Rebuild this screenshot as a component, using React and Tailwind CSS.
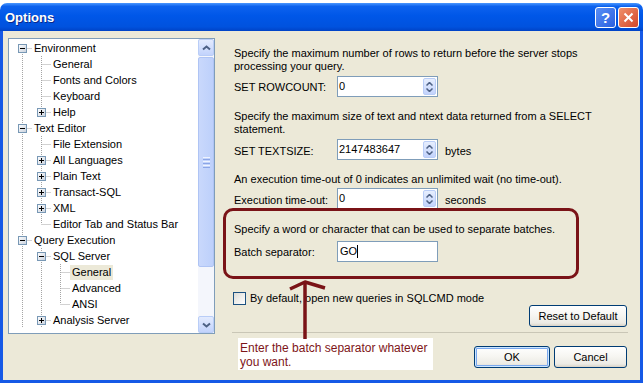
import React from "react";

const tree = [
  { label: "Environment", depth: 0, anc: [], exp: "-", first: true, next: true },
  { label: "General", depth: 1, anc: [true], next: true },
  { label: "Fonts and Colors", depth: 1, anc: [true], next: true },
  { label: "Keyboard", depth: 1, anc: [true], next: true },
  { label: "Help", depth: 1, anc: [true], exp: "+", next: false },
  { label: "Text Editor", depth: 0, anc: [], exp: "-", next: true },
  { label: "File Extension", depth: 1, anc: [true], next: true },
  { label: "All Languages", depth: 1, anc: [true], exp: "+", next: true },
  { label: "Plain Text", depth: 1, anc: [true], exp: "+", next: true },
  { label: "Transact-SQL", depth: 1, anc: [true], exp: "+", next: true },
  { label: "XML", depth: 1, anc: [true], exp: "+", next: true },
  { label: "Editor Tab and Status Bar", depth: 1, anc: [true], next: false },
  { label: "Query Execution", depth: 0, anc: [], exp: "-", next: true },
  { label: "SQL Server", depth: 1, anc: [true], exp: "-", next: true },
  { label: "General", depth: 2, anc: [true, true], next: true, selected: true },
  { label: "Advanced", depth: 2, anc: [true, true], next: true },
  { label: "ANSI", depth: 2, anc: [true, true], next: false },
  { label: "Analysis Server", depth: 1, anc: [true], exp: "+", next: true },
];

// dotted connector lines + expander box for one tree row
function Prefix({ row }) {
  const cx = 19 * row.depth + 9.5;
  return (
    <svg width={19 * (row.depth + 1)} height={16} className="shrink-0">
      {row.anc.map((on, i) =>
        on ? (
          <line key={i} x1={19 * i + 9.5} x2={19 * i + 9.5} y1={0} y2={16} stroke="#A5A5A5" strokeDasharray="1 1" />
        ) : null
      )}
      {!row.first && <line x1={cx} x2={cx} y1={0} y2={8} stroke="#A5A5A5" strokeDasharray="1 1" />}
      {row.next && <line x1={cx} x2={cx} y1={8} y2={16} stroke="#A5A5A5" strokeDasharray="1 1" />}
      <line x1={cx} x2={19 * row.depth + 19} y1={8.5} y2={8.5} stroke="#A5A5A5" strokeDasharray="1 1" />
      {row.exp && (
        <g>
          <defs>
            <linearGradient id="exp" x1="0" y1="0" x2="1" y2="1">
              <stop offset="0" stopColor="#FFFFFF" />
              <stop offset="1" stopColor="#C8D0DC" />
            </linearGradient>
          </defs>
          <rect x={cx - 4} y={4.5} width={8} height={8} fill="url(#exp)" stroke="#7898B5" />
          <line x1={cx - 2.5} x2={cx + 2.5} y1={8.5} y2={8.5} stroke="#000" />
          {row.exp === "+" && <line x1={cx} x2={cx} y1={6} y2={11} stroke="#000" />}
        </g>
      )}
    </svg>
  );
}

function Chevron({ down }) {
  return (
    <svg width="9" height="6" viewBox="0 0 9 6">
      <path d={down ? "M1 1.5 L4.5 4.5 L8 1.5" : "M1 4.5 L4.5 1.5 L8 4.5"} fill="none" stroke="#4D6185" strokeWidth="2" />
    </svg>
  );
}

function ScrollButton({ down }) {
  return (
    <div className="h-[17px] w-[16px] shrink-0 rounded-[2px] border border-[#B9CDF7] bg-[linear-gradient(to_bottom,#E3EBFE,#C2D3FC)] flex items-center justify-center">
      <Chevron down={down} />
    </div>
  );
}

function Spin() {
  return (
    <div className="ml-auto mr-[1px] h-[17px] w-[13px] rounded-[2px] border border-[#B9CDF7] bg-[linear-gradient(to_bottom,#E6EEFE,#C3D3FC)] flex flex-col items-center justify-center gap-[2px]">
      <svg width="7" height="4" viewBox="0 0 7 4"><path d="M0.5 3.5 L3.5 0.5 L6.5 3.5" fill="none" stroke="#4D6185" strokeWidth="1.5" /></svg>
      <svg width="7" height="4" viewBox="0 0 7 4"><path d="M0.5 0.5 L3.5 3.5 L6.5 0.5" fill="none" stroke="#4D6185" strokeWidth="1.5" /></svg>
    </div>
  );
}

function NumBox({ value }) {
  return (
    <div className="h-[21px] w-[101px] border border-[#7F9DB9] bg-white flex items-center pl-[1px]">
      <span className="leading-[13px]">{value}</span>
      <Spin />
    </div>
  );
}

function XpButton({ children, className, primary }) {
  return (
    <button
      className={
        "h-[22px] rounded-[3px] border border-[#003C74] bg-[linear-gradient(to_bottom,#FFFFFF_0%,#F7F6F2_45%,#ECEBE5_85%,#D8D2C6_100%)] text-[11px] leading-[13px] text-black " +
        (primary ? "shadow-[inset_0_0_0_1px_#CEE7FF,inset_0_0_0_2px_#7AA8EE] " : "") +
        className
      }
    >
      {children}
    </button>
  );
}

export default function App() {
  return (
    <div className="relative h-[383px] w-[643px] overflow-hidden bg-white font-['Liberation_Sans',Arial,sans-serif] text-[11px] leading-[13px] text-black">
      <div className="h-[3px] bg-white" />
      <div className="flex h-[380px] flex-col">
        {/* title bar */}
        <div className="flex h-[28px] shrink-0 items-center rounded-t-[7px] bg-[linear-gradient(to_bottom,#4A97FF_0%,#0D62EE_12%,#0057E8_45%,#0052DE_85%,#0043C6_100%)] pl-[5px] pr-[4px]">
          <span className="text-[13px] font-bold text-white [text-shadow:1px_1px_0_#0A2A8A]">Options</span>
          <div className="ml-auto flex gap-[2px]">
            <div className="flex h-[21px] w-[21px] items-center justify-center rounded-[3px] border border-white bg-[linear-gradient(135deg,#5A8FF5,#2A60E0)] text-[15px] font-bold text-white">
              ?
            </div>
            <div className="flex h-[21px] w-[21px] items-center justify-center rounded-[3px] border border-white bg-[linear-gradient(135deg,#F0906A,#D4472A)]">
              <svg width="11" height="11" viewBox="0 0 11 11">
                <path d="M1.5 1.5 L9.5 9.5 M9.5 1.5 L1.5 9.5" stroke="#fff" strokeWidth="2" />
              </svg>
            </div>
          </div>
        </div>

        {/* window body */}
        <div className="flex flex-1 border-x-[3px] border-b-[3px] border-[#1659E6] bg-[#ECE9D8] pl-[5px] pt-[7px]">
          {/* tree */}
          <div className="flex h-[296px] w-[207px] shrink-0 border border-[#7F9DB9] bg-white">
            <div className="flex-1 overflow-hidden pl-[4px] pt-[1px]">
              {tree.map((row, i) => (
                <div key={i} className="flex h-[16px] items-center whitespace-nowrap">
                  <Prefix row={row} />
                  <span className={"px-[2px] leading-[15px] " + (row.selected ? "bg-[#ECE9D8]" : "")}>{row.label}</span>
                </div>
              ))}
            </div>
            <div className="flex w-[16px] flex-col bg-[#F4F6FC]">
              <ScrollButton />
              <div className="flex-1 pt-[1px]">
                <div className="flex h-[210px] flex-col items-center justify-center gap-[1px] rounded-[2px] border border-[#AFC4F4] bg-[linear-gradient(to_right,#C9D8FC,#BDD0FB)]">
                  <div className="h-[1px] w-[7px] bg-[#EEF3FE]" />
                  <div className="h-[1px] w-[7px] bg-[#8CA6E6]" />
                  <div className="h-[1px] w-[7px] bg-[#EEF3FE]" />
                  <div className="h-[1px] w-[7px] bg-[#8CA6E6]" />
                  <div className="h-[1px] w-[7px] bg-[#EEF3FE]" />
                  <div className="h-[1px] w-[7px] bg-[#8CA6E6]" />
                </div>
              </div>
              <ScrollButton down />
            </div>
          </div>

          {/* settings */}
          <div className="flex flex-1 flex-col pl-[19px] pr-[13px]">
            <p className="mt-[9px] whitespace-nowrap">
              Specify the maximum number of rows to return before the server stops
              <br />
              processing your query.
            </p>
            <div className="mt-[3px] flex">
              <span className="mt-[5px] w-[103px]">SET ROWCOUNT:</span>
              <NumBox value="0" />
            </div>

            <p className="mt-[13px] whitespace-nowrap">
              Specify the maximum size of text and ntext data returned from a SELECT
              <br />
              statement.
            </p>
            <div className="mt-[3px] flex">
              <span className="mt-[6px] w-[103px]">SET TEXTSIZE:</span>
              <NumBox value="2147483647" />
              <span className="ml-[7px] mt-[6px]">bytes</span>
            </div>

            <p className="mt-[13px] whitespace-nowrap">An execution time-out of 0 indicates an unlimited wait (no time-out).</p>
            <div className="mt-[2px] flex">
              <span className="mt-[6px] w-[103px]">Execution time-out:</span>
              <NumBox value="0" />
              <span className="ml-[7px] mt-[6px]">seconds</span>
            </div>

            {/* highlighted group */}
            <div className="ml-[-11px] mt-[-1px] h-[71px] w-[356px] rounded-[10px] border-[3px] border-[#7A1317] pl-[8px] pt-[12px]">
              <p className="whitespace-nowrap">Specify a word or character that can be used to separate batches.</p>
              <div className="mt-[5px] flex">
                <span className="mt-[5px] w-[103px]">Batch separator:</span>
                <div className="flex h-[21px] w-[101px] items-center border border-[#7F9DB9] bg-white pl-[2px]">
                  <span>GO</span>
                  <span className="h-[13px] w-[1px] bg-black" />
                </div>
              </div>
            </div>

            <div className="ml-[-1px] mt-[13px] flex items-center gap-[4px]">
              <div className="h-[13px] w-[13px] border border-[#1C5180] bg-[linear-gradient(135deg,#DCDCD7,#FFFFFF)]" />
              <span>By default, open new queries in SQLCMD mode</span>
            </div>

            <XpButton className="w-[98px] self-end">Reset to Default</XpButton>

            <div className="ml-[-2px] mr-[-1px] mt-[5px] h-[1px] bg-[#C9C6B6]" />

            <div className="mt-[5px] flex">
              <div className="ml-[4px] h-[32px] w-[195px] bg-white px-[2px] pt-[3px] text-[12px] leading-[14px] text-[#7E1518]">
                Enter the batch separator whatever
                <br />
                you want.
              </div>
              <div className="ml-auto mt-[8px] flex gap-[4px]">
                <XpButton primary className="w-[76px]">OK</XpButton>
                <XpButton className="w-[73px]">Cancel</XpButton>
              </div>
            </div>
          </div>
        </div>
      </div>

      {/* annotation arrow drawn over the dialog */}
      <svg className="pointer-events-none absolute left-[284px] top-[276px]" width="46" height="64" viewBox="0 0 46 64">
        <path d="M21 6 L21 63" stroke="#7A1317" strokeWidth="3.5" />
        <path d="M6 13 L21 6 L41 12" fill="none" stroke="#7A1317" strokeWidth="3.5" strokeLinejoin="round" />
      </svg>
    </div>
  );
}
